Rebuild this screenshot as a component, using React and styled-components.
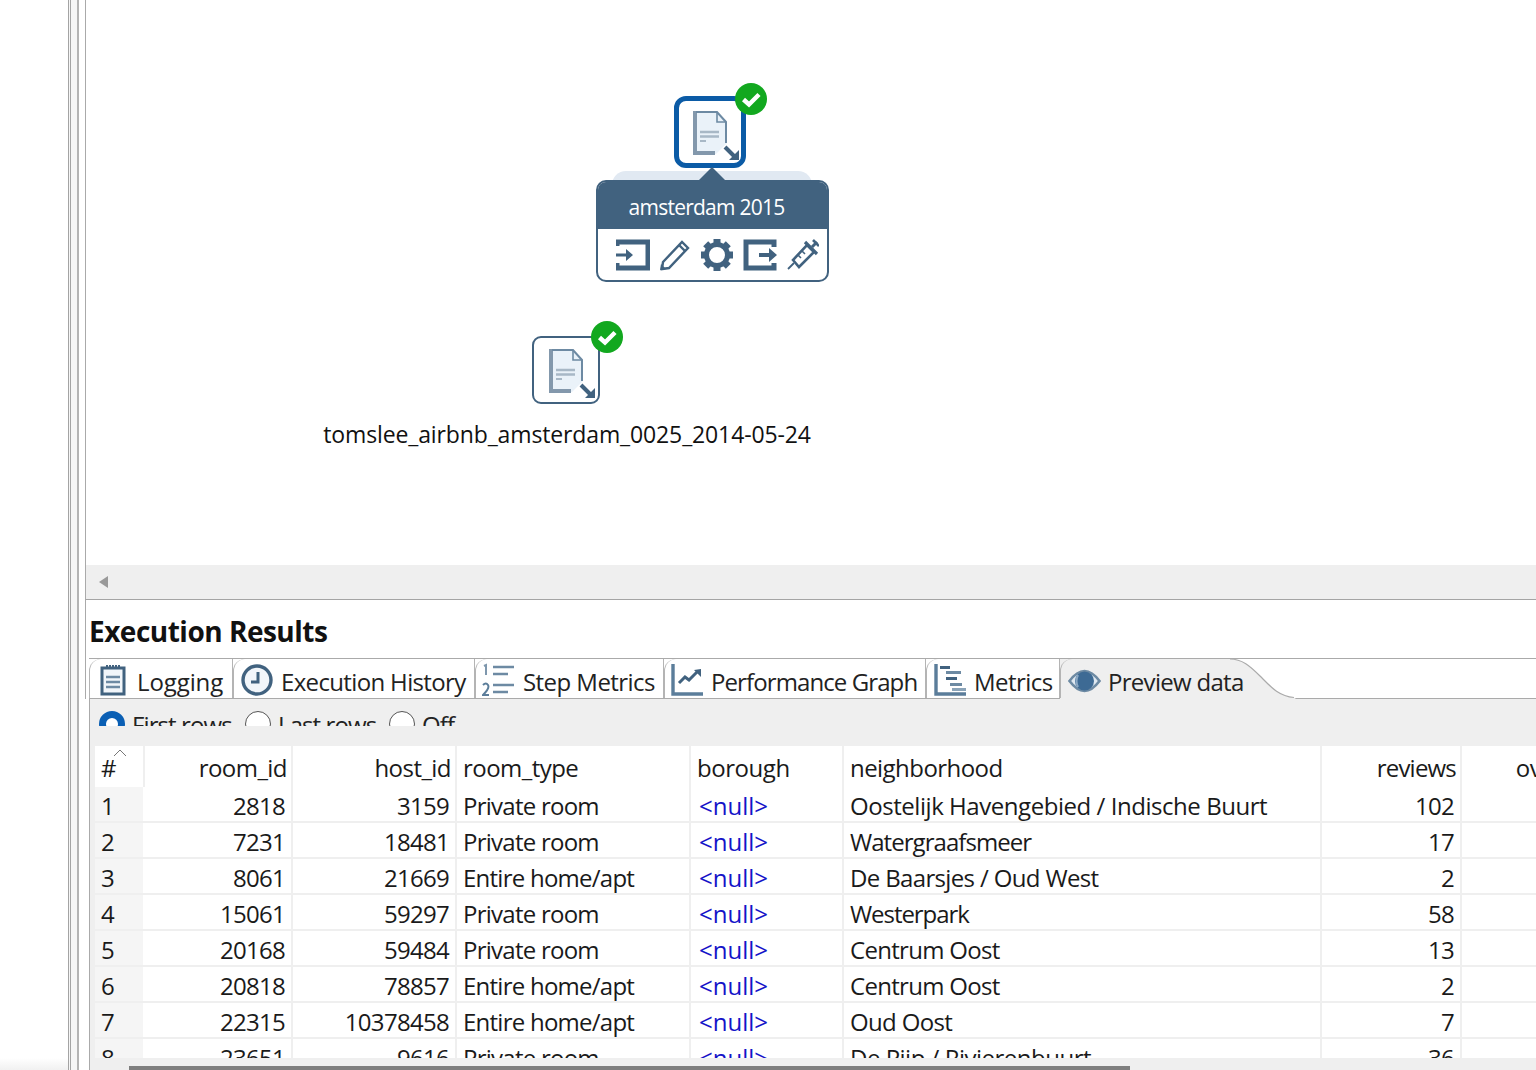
import React from "react";
import styled, { createGlobalStyle } from "styled-components";

const Global = createGlobalStyle`
  html, body { margin: 0; padding: 0; background: #fff; }
  body { font-family: "Open Sans", "Noto Sans", sans-serif; color: #111; }
`;

const Page = styled.div`
  width: 1536px;
  height: 1070px;
  display: flex;
  overflow: hidden;
  background: #fff;
`;

const LeftPane = styled.div`
  width: 68px;
  flex: none;
  background: linear-gradient(to bottom, #fff 1058px, #f1f1f1 1070px);
`;

const Sash = styled.div`
  width: 6px;
  flex: none;
  background: #f6f6f6;
  border-left: 3px double #a4a4a4;
  border-right: 2px solid #b4b4b4;
`;

const Gap = styled.div`
  width: 6px;
  flex: none;
`;

const Main = styled.div`
  flex: 1;
  min-width: 0;
  display: flex;
  flex-direction: column;
`;

const Canvas = styled.div`
  height: 565px;
  flex: none;
  position: relative;
  border-left: 1px solid #aaa;
  background: #fff;
`;

const HScroll = styled.div`
  height: 34px;
  flex: none;
  display: flex;
  align-items: center;
  padding-left: 13px;
  background: #efefef;
  border-left: 1px solid #aaa;
  border-bottom: 1px solid #a4a4a4;
`;

const ArrowLeft = styled.div`
  width: 0;
  height: 0;
  border-top: 6px solid transparent;
  border-bottom: 6px solid transparent;
  border-right: 9px solid #999;
`;

const Results = styled.div`
  flex: 1;
  min-height: 0;
  display: flex;
  flex-direction: column;
`;

const ResultsHead = styled.div`
  flex: none;
  border-left: 1px solid #aaa;
  padding-left: 3px;
`;

const Title = styled.h2`
  margin: 0;
  height: 58px;
  line-height: 62px;
  font-size: 28px;
  font-weight: 700;
  letter-spacing: -0.5px;
  color: #111;
`;

const TabBar = styled.div`
  height: 39px;
  display: flex;
  border-top: 1px solid #aaa;
  border-bottom: 1px solid #aaa;
`;

const Tab = styled.div`
  width: ${(p) => p.$w}px;
  flex: none;
  box-sizing: border-box;
  position: relative;
  display: flex;
  align-items: center;
  gap: ${(p) => p.$gap}px;
  padding: 5px 0 0 ${(p) => p.$pad}px;
  font-size: 24px;
  letter-spacing: ${(p) => p.$ls}px;
  white-space: nowrap;
  border-right: 1px solid #b4b4b4;
  color: #222;
  &::before {
    content: "";
    position: absolute;
    left: 0;
    top: 0;
    width: 12px;
    height: 39px;
    box-sizing: border-box;
    border-left: 1px solid #b4b4b4;
    border-top-left-radius: 12px;
  }
`;

const TabIcon = styled.span`
  display: flex;
  flex: none;
  margin-top: -2px;
`;

const ActiveTab = styled(Tab)`
  background: #efefef;
  border-right: none;
  margin-bottom: -1px;
  z-index: 1;
`;

const TabCurve = styled.svg`
  position: absolute;
  left: 170px;
  top: -1px;
  width: 66px;
  height: 41px;
  z-index: -1;
`;

const ResultsBody = styled.div`
  flex: 1;
  min-height: 0;
  display: flex;
  flex-direction: column;
  margin-left: 4px;
  border-left: 1px solid #aaa;
  position: relative;
  background: #efefef;
`;

const OptionStrip = styled.div`
  height: 47px;
  flex: none;
`;

const OptionClip = styled.div`
  height: 27px;
  overflow: hidden;
  display: flex;
  padding: 12px 0 0 9px;
  box-sizing: border-box;
  font-size: 24px;
  letter-spacing: -0.9px;
  color: #222;
`;

const Option = styled.div`
  width: ${(p) => p.$w}px;
  flex: none;
  display: flex;
  gap: 7px;
  white-space: nowrap;
`;

const Radio = styled.div`
  width: 26px;
  height: 26px;
  flex: none;
  box-sizing: border-box;
  border-radius: 50%;
  background: #fff;
  border: ${(p) => (p.$on ? "7px solid #0a5fb4" : "1.5px solid #555")};
`;

const OptionText = styled.span`
  line-height: 26px;
  margin-top: 1px;
`;

const Table = styled.div`
  flex: 1;
  min-height: 0;
  overflow: hidden;
  margin-left: 5px;
  background: #fff;
`;

const cols = "50px 148px 164px 234px 153px 478px 140px 264px";

const HeadRow = styled.div`
  display: grid;
  grid-template-columns: ${cols};
  height: 41px;
  width: 1631px;
`;

const Row = styled.div`
  display: grid;
  grid-template-columns: ${cols};
  height: 36px;
  width: 1631px;
  box-sizing: border-box;
  border-bottom: 2px solid #efefef;
`;

const Cell = styled.div`
  box-sizing: border-box;
  padding: 0 ${(p) => p.$r || 6}px 0 6px;
  border-right: 2px solid #efefef;
  font-size: 24px;
  letter-spacing: ${(p) => (p.$ls === undefined ? -0.55 : p.$ls)}px;
  line-height: 37px;
  white-space: nowrap;
  overflow: hidden;
  text-align: ${(p) => (p.$right ? "right" : "left")};
  color: #1a1a1a;
`;

const NullCell = styled(Cell)`
  padding-left: 8px;
  color: #1414c8;
`;

const IndexCell = styled(Cell)`
  background: #f5f5f5;
  border-right: 2px solid #fff;
`;

const HeadCell = styled(Cell)`
  line-height: 43px;
`;

const HeadIndex = styled(HeadCell)`
  position: relative;
`;

const SortCaret = styled.svg`
  position: absolute;
  left: 18px;
  top: 3px;
  width: 14px;
  height: 8px;
`;

const BottomBar = styled.div`
  position: absolute;
  left: 0;
  right: 0;
  bottom: 0;
  height: 12px;
  background: #efefef;
`;

const Thumb = styled.div`
  position: absolute;
  left: 39px;
  bottom: 0;
  width: 1001px;
  height: 4px;
  background: #7e7e7e;
`;

const NodeBox = styled.div`
  position: absolute;
  left: ${(p) => p.$x}px;
  top: ${(p) => p.$y}px;
  width: ${(p) => p.$s}px;
  height: ${(p) => p.$s}px;
  box-sizing: border-box;
  padding: ${(p) => p.$pt}px 0 0 ${(p) => p.$pl}px;
  background: #fff;
  border: ${(p) => (p.$selected ? "5px solid #0b5ba6" : "2px solid #41627f")};
  border-radius: ${(p) => (p.$selected ? 12 : 9)}px;
`;

const Badge = styled.svg`
  position: absolute;
  left: ${(p) => p.$x}px;
  top: ${(p) => p.$y}px;
  width: 34px;
  height: 34px;
`;

const NodeLabel = styled.div`
  position: absolute;
  left: 200px;
  top: 418px;
  width: 562px;
  text-align: center;
  font-size: 23px;
  letter-spacing: -0.13px;
  color: #111;
`;

const PopBack = styled.div`
  position: absolute;
  left: 526px;
  top: 171px;
  width: 200px;
  height: 20px;
  background: #e1e9f2;
  border-radius: 14px 14px 0 0;
`;

const PopArrow = styled.div`
  position: absolute;
  left: 612px;
  top: 167px;
  width: 0;
  height: 0;
  border-left: 14px solid transparent;
  border-right: 14px solid transparent;
  border-bottom: 14px solid #41627f;
`;

const Popup = styled.div`
  position: absolute;
  left: 510px;
  top: 180px;
  width: 233px;
  height: 102px;
  box-sizing: border-box;
  border: 2px solid #41627f;
  border-radius: 10px;
  background: #fff;
  overflow: hidden;
`;

const PopHead = styled.div`
  height: 47px;
  background: #41627f;
  color: #fff;
  font-size: 21px;
  letter-spacing: -0.75px;
  line-height: 50px;
  text-align: center;
  padding-right: 12px;
`;

const PopIcons = styled.div`
  display: flex;
  gap: 9px;
  padding: 9px 0 0 18px;
  align-items: center;
`;

const Dark = "#41627f";

function DocIcon() {
  return (
    <svg width="48" height="52" viewBox="0 0 48 52" style={{ display: "block" }}>
      <path d="M2 1h22l10 11v20L23 43H2z" fill="#eaf2f9" />
      <path d="M2 0v42h20" fill="none" stroke="#8398ac" strokeWidth="4" />
      <path d="M3 1h21l9 10v21" fill="none" stroke="#6d8aa3" strokeWidth="2" />
      <path d="M24 1v10h9" fill="none" stroke="#6d8aa3" strokeWidth="1.6" />
      <path d="M7 21h19M7 25.5h19" stroke="#a8b8c6" strokeWidth="2.6" />
      <path d="M7 30h6" stroke="#a8b8c6" strokeWidth="2" />
      <path d="M32 36l11 11" stroke="#41627f" strokeWidth="4" />
      <path d="M46 39v10H36z" fill="#41627f" />
    </svg>
  );
}

function CheckBadge({ x, y }) {
  return (
    <Badge $x={x} $y={y} viewBox="0 0 34 34">
      <circle cx="17" cy="17" r="16" fill="#12a81f" />
      <path d="M9.5 17.5l5.5 5 10-10" fill="none" stroke="#fff" strokeWidth="4.5" />
    </Badge>
  );
}

function InputIcon() {
  return (
    <svg width="34" height="32" viewBox="0 0 34 32">
      <path d="M0 7V3h31v26H0v-5" fill="none" stroke={Dark} strokeWidth="5" transform="translate(1 0)" />
      <path d="M0 14.5h10V10l7 6-7 6v-4.5H0z" fill={Dark} />
    </svg>
  );
}

function OutputIcon() {
  return (
    <svg width="34" height="32" viewBox="0 0 34 32">
      <path d="M31 8V3H3v26h28v-5" fill="none" stroke={Dark} strokeWidth="5" />
      <path d="M16 14h10V9l8 7-8 7v-5H16z" fill={Dark} />
    </svg>
  );
}

function PencilIcon() {
  return (
    <svg width="32" height="32" viewBox="0 0 32 32">
      <path d="M4 23L23 3l6 6L10 29l-7 1z" fill="none" stroke={Dark} strokeWidth="2.4" />
      <path d="M20 6l6 6" stroke={Dark} strokeWidth="2.4" />
      <path d="M2 25l5 5-6 1z" fill={Dark} />
    </svg>
  );
}

function GearIcon() {
  const teeth = [0, 45, 90, 135, 180, 225, 270, 315];
  return (
    <svg width="34" height="34" viewBox="0 0 34 34">
      <circle cx="17" cy="17" r="10.5" fill="none" stroke={Dark} strokeWidth="5" />
      {teeth.map((a) => (
        <rect key={a} x="13.5" y="1" width="7" height="5" fill={Dark} transform={`rotate(${a} 17 17)`} />
      ))}
    </svg>
  );
}

function SyringeIcon() {
  return (
    <svg width="33" height="32" viewBox="0 0 33 32">
      <path d="M2 30l6-6" stroke={Dark} strokeWidth="1.8" />
      <path d="M7 21l6 7 15-15-7-7z" fill="none" stroke={Dark} strokeWidth="2.6" />
      <path d="M19 3l12 12" stroke={Dark} strokeWidth="3.2" />
      <path d="M26 8l5-5" stroke={Dark} strokeWidth="3" />
      <path d="M27 1l6 6" stroke={Dark} strokeWidth="2.6" />
      <path d="M12 16l3 3M16 12l3 3" stroke={Dark} strokeWidth="1.6" />
    </svg>
  );
}

function LoggingIcon() {
  return (
    <svg width="26" height="32" viewBox="0 0 26 32">
      <rect x="2" y="4" width="22" height="26" fill="#f2f6fa" stroke={Dark} strokeWidth="3" />
      <path d="M6 3h14" stroke={Dark} strokeWidth="4" strokeDasharray="2 1" />
      <path d="M6 13h14M6 18h14M6 23h14" stroke="#6d8aa3" strokeWidth="2.4" />
    </svg>
  );
}

function ClockIcon() {
  return (
    <svg width="32" height="32" viewBox="0 0 32 32">
      <circle cx="16" cy="16" r="14" fill="#f2f6fa" stroke={Dark} strokeWidth="3.4" />
      <path d="M17 8v10h-7" fill="none" stroke={Dark} strokeWidth="3" />
    </svg>
  );
}

function StepIcon() {
  return (
    <svg width="34" height="34" viewBox="0 0 34 34">
      <path d="M11 4h21M11 11h15M11 22h21M11 29h15" stroke="#6d8aa3" strokeWidth="2.6" />
      <path d="M2 3l2-1v10" fill="none" stroke="#7e97ad" strokeWidth="2" />
      <path d="M1 22q3-3 5 0t-5 10h6" fill="none" stroke="#5b7d9a" strokeWidth="2" />
    </svg>
  );
}

function GraphIcon() {
  return (
    <svg width="32" height="32" viewBox="0 0 32 32">
      <path d="M2 0v30h31" fill="none" stroke="#5b7d9a" strokeWidth="3.4" />
      <path d="M8 19l6-6 4 3 8-8" fill="none" stroke={Dark} strokeWidth="3" />
      <path d="M30 5v8l-7-7z" fill={Dark} />
    </svg>
  );
}

function MetricsIcon() {
  return (
    <svg width="32" height="32" viewBox="0 0 32 32">
      <path d="M2 0v30h31" fill="none" stroke="#5b7d9a" strokeWidth="3.4" />
      <path d="M6 2h10v3H6z" fill={Dark} />
      <path d="M12 7h15v3H12z" fill="#6d8aa3" />
      <path d="M12 13h11v3H12z" fill={Dark} />
      <path d="M16 19h12v3H16z" fill="#6d8aa3" />
      <path d="M18 24h14v3H18z" fill="#8aa3b8" />
    </svg>
  );
}

function EyeIcon() {
  return (
    <svg width="33" height="24" viewBox="0 0 33 24">
      <path d="M1.5 12Q16.5-8 31.5 12 16.5 32 1.5 12z" fill="#dfe8f0" stroke="#6d8aa3" strokeWidth="2.6" />
      <circle cx="16.5" cy="12" r="9.5" fill="#3d6a94" />
      <path d="M10 6q-3 6 0 12" fill="none" stroke="#8aa8c4" strokeWidth="2" />
    </svg>
  );
}

const tabs = [
  { label: "Logging", w: 144, pad: 11, gap: 11, ls: -0.1, icon: <LoggingIcon /> },
  { label: "Execution History", w: 242, pad: 8, gap: 8, ls: -0.65, icon: <ClockIcon /> },
  { label: "Step Metrics", w: 189, pad: 7, gap: 7, ls: -0.55, icon: <StepIcon /> },
  { label: "Performance Graph", w: 262, pad: 7, gap: 8, ls: -0.9, icon: <GraphIcon /> },
  { label: "Metrics", w: 134, pad: 8, gap: 8, ls: -0.55, icon: <MetricsIcon /> },
];

const rows = [
  ["1", "2818", "3159", "Private room", "Oostelijk Havengebied / Indische Buurt", "102", -0.45],
  ["2", "7231", "18481", "Private room", "Watergraafsmeer", "17", -0.95],
  ["3", "8061", "21669", "Entire home/apt", "De Baarsjes / Oud West", "2", -0.65],
  ["4", "15061", "59297", "Private room", "Westerpark", "58", -1.05],
  ["5", "20168", "59484", "Private room", "Centrum Oost", "13", -0.7],
  ["6", "20818", "78857", "Entire home/apt", "Centrum Oost", "2", -0.7],
  ["7", "22315", "10378458", "Entire home/apt", "Oud Oost", "7", -0.65],
  ["8", "23651", "9616", "Private room", "De Pijp / Rivierenbuurt", "36", -0.5],
];

export default function App() {
  return (
    <Page>
      <Global />
      <LeftPane />
      <Sash />
      <Gap />
      <Main>
        <Canvas>
          <NodeBox $x={588} $y={96} $s={72} $pl={14} $pt={10} $selected>
            <DocIcon />
          </NodeBox>
          <CheckBadge x={648} y={82} />
          <PopBack />
          <PopArrow />
          <Popup>
            <PopHead>amsterdam 2015</PopHead>
            <PopIcons>
              <InputIcon />
              <PencilIcon />
              <GearIcon />
              <OutputIcon />
              <SyringeIcon />
            </PopIcons>
          </Popup>
          <NodeBox $x={446} $y={336} $s={68} $pl={15} $pt={11}>
            <DocIcon />
          </NodeBox>
          <CheckBadge x={504} y={320} />
          <NodeLabel>tomslee_airbnb_amsterdam_0025_2014-05-24</NodeLabel>
        </Canvas>
        <HScroll>
          <ArrowLeft />
        </HScroll>
        <Results>
          <ResultsHead>
            <Title>Execution Results</Title>
            <TabBar>
              {tabs.map((t) => (
                <Tab key={t.label} $w={t.w} $pad={t.pad} $gap={t.gap} $ls={t.ls}>
                  <TabIcon>{t.icon}</TabIcon>
                  {t.label}
                </Tab>
              ))}
              <ActiveTab $w={170} $pad={8} $gap={7} $ls={-0.7}>
                <TabIcon>
                  <EyeIcon />
                </TabIcon>
                Preview data
                <TabCurve viewBox="0 0 66 41">
                  <path d="M0 1C12 1 20 8 30 18S48 38 64 39.5L66 41H0z" fill="#efefef" />
                  <path d="M0 1C12 1 20 8 30 18S48 38 64 39.5" fill="none" stroke="#aaa" strokeWidth="1.2" />
                </TabCurve>
              </ActiveTab>
            </TabBar>
          </ResultsHead>
          <ResultsBody>
            <OptionStrip>
              <OptionClip>
                <Option $w={146}>
                  <Radio $on />
                  <OptionText>First rows</OptionText>
                </Option>
                <Option $w={144}>
                  <Radio />
                  <OptionText>Last rows</OptionText>
                </Option>
                <Option $w={80}>
                  <Radio />
                  <OptionText>Off</OptionText>
                </Option>
              </OptionClip>
            </OptionStrip>
            <Table>
              <HeadRow>
                <HeadIndex>
                  #
                  <SortCaret viewBox="0 0 14 8">
                    <path d="M1 7l6-6 6 6" fill="none" stroke="#777" strokeWidth="1" />
                  </SortCaret>
                </HeadIndex>
                <HeadCell $right $r={4}>room_id</HeadCell>
                <HeadCell $right $r={4}>host_id</HeadCell>
                <HeadCell>room_type</HeadCell>
                <HeadCell $ls={-0.45}>borough</HeadCell>
                <HeadCell>neighborhood</HeadCell>
                <HeadCell $right $r={4} $ls={-0.8}>reviews</HeadCell>
                <HeadCell $right $r={6}>overall_satisfaction</HeadCell>
              </HeadRow>
              {rows.map((r) => (
                <Row key={r[0]}>
                  <IndexCell>{r[0]}</IndexCell>
                  <Cell $right $ls={-0.7}>{r[1]}</Cell>
                  <Cell $right $ls={-0.7}>{r[2]}</Cell>
                  <Cell $ls={-0.75}>{r[3]}</Cell>
                  <NullCell $ls={0}>&lt;null&gt;</NullCell>
                  <Cell $ls={r[6]}>{r[4]}</Cell>
                  <Cell $right $ls={-0.7}>{r[5]}</Cell>
                  <Cell />
                </Row>
              ))}
            </Table>
            <BottomBar>
              <Thumb />
            </BottomBar>
          </ResultsBody>
        </Results>
      </Main>
    </Page>
  );
}
